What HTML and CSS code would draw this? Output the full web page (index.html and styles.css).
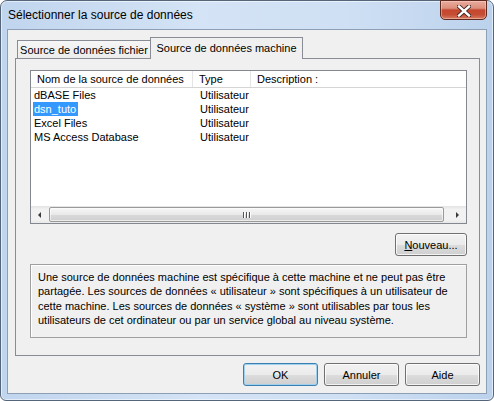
FILE: index.html
```html
<!DOCTYPE html>
<html lang="fr">
<head>
<meta charset="utf-8">
<title>Sélectionner la source de données</title>
<link rel="stylesheet" href="styles.css">
</head>
<body>
<div class="window">
  <div class="titlebar">
    <span class="title">Sélectionner la source de données</span>
    <div class="close">
      <svg width="14" height="12" viewBox="0 0 14 12">
        <path d="M2 1.5 L12 10.5 M12 1.5 L2 10.5" stroke="#3d2420" stroke-width="4.2" stroke-linecap="square" fill="none"/>
        <path d="M2 1.5 L12 10.5 M12 1.5 L2 10.5" stroke="#ffffff" stroke-width="2.4" stroke-linecap="square" fill="none"/>
      </svg>
    </div>
  </div>
  <div class="client">
    <div class="tabs">
      <div class="tab">Source de données fichier</div>
      <div class="tab active">Source de données machine</div>
    </div>
    <div class="panel">
      <div class="listview">
        <div class="lv-header">
          <div class="hcol col-name">Nom de la source de données</div>
          <div class="hcol col-type">Type</div>
          <div class="hcol col-desc">Description :</div>
        </div>
        <div class="lv-body">
          <div class="row"><div class="cell c-name"><span class="lbl">dBASE Files</span></div><div class="cell c-type">Utilisateur</div></div>
          <div class="row"><div class="cell c-name"><span class="lbl sel">dsn_tuto</span></div><div class="cell c-type">Utilisateur</div></div>
          <div class="row"><div class="cell c-name"><span class="lbl">Excel Files</span></div><div class="cell c-type">Utilisateur</div></div>
          <div class="row"><div class="cell c-name"><span class="lbl">MS Access Database</span></div><div class="cell c-type">Utilisateur</div></div>
        </div>
        <div class="hscroll">
          <div class="sb-btn"><span class="arrow-left"></span></div>
          <div class="sb-track">
            <div class="thumb"><span class="grip"><i></i><i></i><i></i></span></div>
          </div>
          <div class="sb-btn"><span class="arrow-right"></span></div>
        </div>
      </div>
      <div class="new-row"><div class="btn btn-new"><u>N</u>ouveau...</div></div>
      <div class="info">Une source de données machine est spécifique à cette machine et ne peut pas être<br>partagée. Les sources de données « utilisateur » sont spécifiques à un utilisateur de<br>cette machine. Les sources de données « système » sont utilisables par tous les<br>utilisateurs de cet ordinateur ou par un service global au niveau système.</div>
    </div>
    <div class="footer">
      <div class="btn btn-default">OK</div>
      <div class="btn">Annuler</div>
      <div class="btn">Aide</div>
    </div>
  </div>
</div>
</body>
</html>
```

FILE: styles.css
```css
* { box-sizing: border-box; }
html, body { margin: 0; padding: 0; }
body {
  width: 494px;
  height: 401px;
  overflow: hidden;
  background: #ffffff;
  font-family: "Liberation Sans", Arial, sans-serif;
  font-size: 11px;
  color: #000;
}
.window {
  position: relative;
  width: 494px;
  height: 401px;
  border: 1px solid #56667a;
  border-radius: 7px 7px 6px 6px;
  padding: 0 6px 6px;
  background: linear-gradient(to right, #c0d5ee 0%, #d4e3f5 40%, #cfe0f4 70%, #bcd2ec 100%);
  box-shadow: inset 0 0 0 1px rgba(255,255,255,0.55);
  display: flex;
  flex-direction: column;
}
.titlebar {
  height: 28px;
  display: flex;
  align-items: center;
  padding-left: 1px;
}
.title {
  font-size: 12px;
  color: #000;
}
.close {
  position: absolute;
  top: -1px;
  right: 6px;
  width: 47px;
  height: 20px;
  border: 1px solid #5e2a20;
  border-radius: 0 0 5px 5px;
  background: linear-gradient(to bottom, #e9ab9d 0%, #dc8f7c 40%, #c6472f 50%, #c44d34 75%, #d77b62 100%);
  box-shadow: inset 0 0 0 1px rgba(255,220,210,0.45);
  display: flex;
  align-items: center;
  justify-content: center;
  padding-top: 1px;
}
.client {
  flex: 1;
  background: #f0f0f0;
  border: 1px solid #8c9fb5;
  display: flex;
  flex-direction: column;
  padding: 7px 6px 0 7px;
}
.tabs {
  display: flex;
  align-items: flex-end;
  height: 21px;
  position: relative;
  z-index: 1;
}
.tab {
  height: 18px;
  width: 134px;
  margin-left: 2px;
  border: 1px solid #898c95;
  border-bottom: none;
  background: linear-gradient(to bottom, #f6f6f6, #ececec);
  display: flex;
  align-items: center;
  justify-content: center;
  white-space: nowrap;
}
.tab.active {
  height: 22px;
  width: 153px;
  margin-left: -1px;
  margin-bottom: -1px;
  background: #f0f0f0;
  padding-bottom: 2px;
}
.panel {
  width: 465px;
  height: 298px;
  border: 1px solid #898c95;
  background: #f0f0f0;
  padding: 11px 0 0 14px;
  display: flex;
  flex-direction: column;
}
.listview {
  width: 437px;
  height: 154px;
  border: 1px solid #828790;
  background: #ffffff;
  display: flex;
  flex-direction: column;
}
.lv-header {
  height: 17px;
  display: flex;
  border-bottom: 1px solid #d5d5d5;
}
.hcol {
  line-height: 16px;
  white-space: nowrap;
}
.col-name { width: 162px; padding-left: 6px; border-right: 1px solid #e5e5e5; }
.col-type { width: 58px; padding-left: 6px; border-right: 1px solid #e5e5e5; }
.col-desc { flex: 1; padding-left: 6px; }
.lv-body { flex: 1; }
.row { height: 14px; display: flex; }
.cell { line-height: 14px; white-space: nowrap; }
.c-name { width: 162px; padding-left: 2px; }
.c-type { width: 58px; padding-left: 7px; }
.lbl { display: inline-block; padding: 0 2px 0 1px; height: 14px; }
.lbl.sel { background: #3399ff; color: #fff; }
.hscroll {
  height: 17px;
  display: flex;
  background: linear-gradient(to bottom, #e3e3e3 0%, #f2f2f2 20%, #f2f2f2 80%, #e8e8e8 100%);
}
.sb-btn {
  width: 17px;
  display: flex;
  align-items: center;
  justify-content: center;
}
.arrow-left {
  width: 0; height: 0;
  border-top: 3px solid transparent;
  border-bottom: 3px solid transparent;
  border-right: 3px solid #3a3a3a;
}
.arrow-right {
  width: 0; height: 0;
  border-top: 3px solid transparent;
  border-bottom: 3px solid transparent;
  border-left: 3px solid #3a3a3a;
}
.sb-track {
  flex: 1;
  padding: 1px 0;
}
.thumb {
  width: 395px;
  height: 15px;
  margin-left: 1px;
  border: 1px solid #9a9a9a;
  border-radius: 2px;
  background: linear-gradient(to bottom, #f7f7f7 0%, #eaeaea 50%, #dadada 51%, #cfcfcf 100%);
  box-shadow: inset 0 0 0 1px rgba(255,255,255,0.6);
  display: flex;
  align-items: center;
  justify-content: center;
}
.grip { display: flex; gap: 2px; }
.grip i {
  display: block;
  width: 1px;
  height: 6px;
  background: #555;
  box-shadow: 1px 0 0 #fff;
}
.new-row {
  width: 437px;
  margin-top: 9px;
  display: flex;
  justify-content: flex-end;
}
.btn {
  width: 75px;
  height: 23px;
  border: 1px solid #707070;
  border-radius: 3px;
  background: linear-gradient(to bottom, #f2f2f2 0%, #ebebeb 50%, #dddddd 50%, #cfcfcf 100%);
  box-shadow: inset 0 0 0 1px rgba(255,255,255,0.75);
  display: flex;
  align-items: center;
  justify-content: center;
  white-space: nowrap;
}
.btn-new { width: 72px; }
.btn-default {
  border-color: #3c7fb1;
  box-shadow: inset 0 0 0 1px #9fd0ee;
}
.info {
  width: 437px;
  height: 74px;
  margin-top: 8px;
  border: 1px solid #a0a0a0;
  box-shadow: inset 1px 1px 0 #ffffff;
  padding: 5px 4px 0 7px;
  line-height: 14.3px;
  white-space: nowrap;
}
.footer {
  margin-top: 7px;
  display: flex;
  justify-content: flex-end;
  gap: 6px;
}
```
